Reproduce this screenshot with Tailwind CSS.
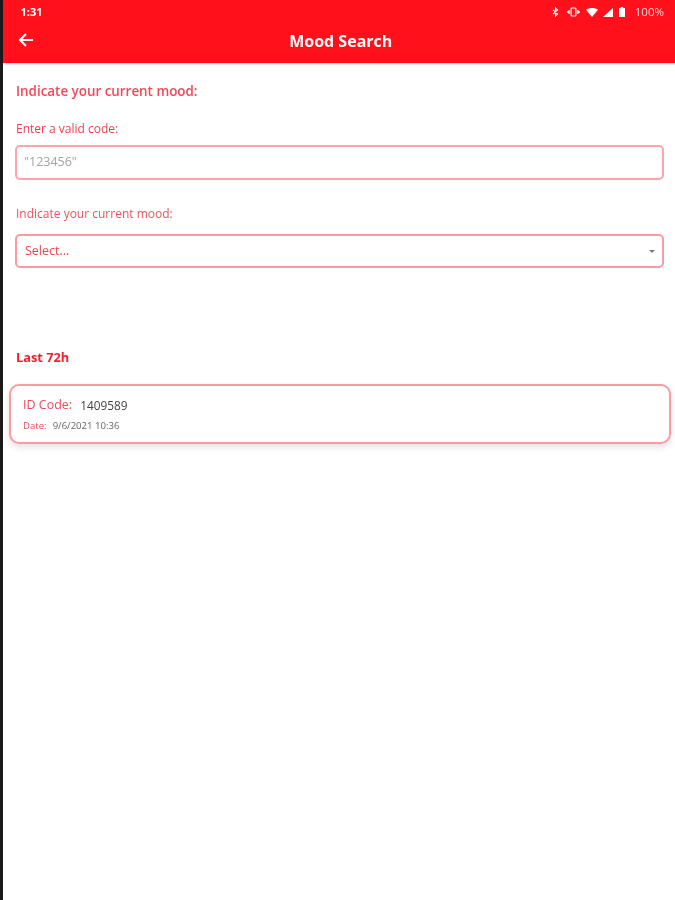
<!DOCTYPE html>
<html lang="en">
<head>
    <meta charset="UTF-8">
    <title>Mood Search</title>
    <script src="https://cdn.jsdelivr.net/npm/@tailwindcss/browser@4"></script>
</head>
<body class="bg-white font-['Open_Sans',sans-serif]">
    <div class="flex h-[900px] w-[675px] overflow-hidden">
        <div class="w-[2.5px] shrink-0 bg-[#1a1a1a]"></div>
        <div class="min-w-0 flex-1 blur-[0.5px]">
            <!-- Barra superior -->
            <header class="h-[63px] bg-[#ff101a] text-white shadow-[0_1px_2px_rgba(0,0,0,0.2)]">
                <div class="flex h-[24px] items-center justify-between pl-[18px] pr-[11px]">
                    <span class="text-[11px] font-bold">1:31</span>
                    <div class="flex items-center gap-[6px] text-[11.5px] text-white/80">
                        <svg width="7" height="10" viewBox="0 0 7 10" fill="none" stroke="white" stroke-width="1.1"><path d="M1 2.8l4.6 4.2-2.1 2V1l2.1 2L1 7.2"/></svg>
                        <svg class="ml-[2px]" width="13" height="10" viewBox="0 0 12 10" fill="none" stroke="white" stroke-width="1.2"><rect x="3.6" y="1" width="4.8" height="8" rx="1"/><path d="M1.6 3v4M0.4 4v2M10.4 3v4M11.6 4v2"/></svg>
                        <svg width="12" height="9" viewBox="0 0 12 9" fill="white"><path d="M0 1.8C3.4-.6 8.6-.6 12 1.8L6 9z"/></svg>
                        <svg class="-ml-[1px]" width="10" height="9" viewBox="0 0 10 9" fill="white"><path d="M10 0v9H0z"/></svg>
                        <svg width="6" height="10" viewBox="0 0 6 10" fill="white"><path d="M1.8 0h2.4v1H6v9H0V1h1.8z"/></svg>
                        <span class="ml-[2px] w-[31px] text-right">100%</span>
                    </div>
                </div>
                <div class="relative flex h-[34px] items-center justify-center">
                    <svg class="absolute left-[15px] top-[8px]" width="16" height="16" viewBox="0 0 16 16" fill="none" stroke="white" stroke-width="2"><path d="M15 8H2M8 2L2 8l6 6"/></svg>
                    <h1 class="pl-[4px] text-[16px] font-bold">Mood Search</h1>
                </div>
            </header>

            <main class="pt-[19px]">
                <div class="pl-[12.5px] pr-[11px]">
                    <h2 class="ml-px text-[13.4px] leading-[18px] font-semibold text-[#f2485a]">Indicate your current mood:</h2>

                    <label class="mt-[21px] ml-px block text-[12px] leading-[16px] text-[#f0404f]">Enter a valid code:</label>
                    <div class="mt-[8px] flex h-[35px] items-center rounded-[5px] border-2 border-[#fda4ac] px-[7px]">
                        <span class="text-[12.5px] text-[#a3a3a3]">"123456"</span>
                    </div>

                    <label class="mt-[26px] ml-px block text-[12px] leading-[16px] text-[#f0505f]">Indicate your current mood:</label>
                    <div class="mt-[12px] flex h-[34px] items-center justify-between rounded-[5px] border-2 border-[#fb9aa3] pl-[8px] pr-[7px]">
                        <span class="text-[12.5px] text-[#f0404f]">Select...</span>
                        <span class="h-0 w-0 border-x-[3px] border-t-[3px] border-x-transparent border-t-[#777]"></span>
                    </div>

                    <h2 class="mt-[80px] ml-px text-[12.8px] leading-[18px] font-bold text-[#f5202f]">Last 72h</h2>
                </div>

                <!-- Tarjeta de registro -->
                <div class="mt-[18px] ml-[6.5px] h-[60px] w-[662px] rounded-[10px] border-2 border-[#fb9aa3] pt-[11px] pl-[12px] shadow-[0_3px_6px_rgba(0,0,0,0.12)]">
                    <div class="flex items-center gap-[8px] leading-[16px]">
                        <span class="text-[12.5px] text-[#f2485a]">ID Code:</span>
                        <span class="text-[11.8px] text-[#444]">1409589</span>
                    </div>
                    <div class="mt-[7px] flex items-center gap-[6px] text-[9.6px] leading-[12px]">
                        <span class="text-[#f2485a]">Date:</span>
                        <span class="text-[#666]">9/6/2021 10:36</span>
                    </div>
                </div>
            </main>
        </div>
    </div>
</body>
</html>
